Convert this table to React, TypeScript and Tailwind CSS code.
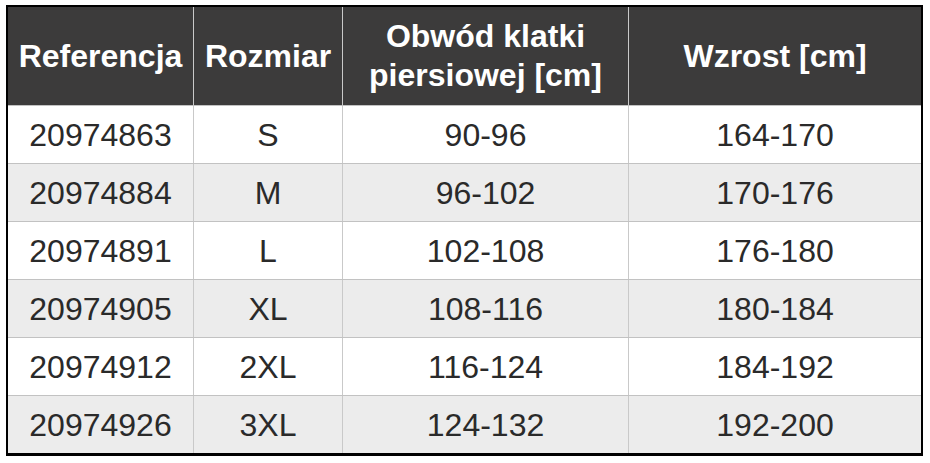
import React from 'react';

const headers = ['Referencja', 'Rozmiar', 'Obwód klatki piersiowej [cm]', 'Wzrost [cm]'];

const rows = [
  ['20974863', 'S', '90-96', '164-170'],
  ['20974884', 'M', '96-102', '170-176'],
  ['20974891', 'L', '102-108', '176-180'],
  ['20974905', 'XL', '108-116', '180-184'],
  ['20974912', '2XL', '116-124', '184-192'],
  ['20974926', '3XL', '124-132', '192-200'],
];

export default function App() {
  return (
    <div className="w-[930px] h-[463px] bg-white pt-[5px] pl-[6px] font-['Liberation_Sans',Arial,sans-serif]">
      <div className="w-[917px] border-2 border-b-[3px] border-black">
        {/* Header */}
        <div className="grid grid-cols-[186px_149px_286px_292px] h-[98px] bg-[#3c3b3b] text-white font-bold text-[32px] leading-[39px]">
          {headers.map((h, i) => (
            <div
              key={h}
              className={`flex items-center justify-center text-center px-3 ${i < 3 ? 'border-r border-[#c9c9c9]' : ''}`}
            >
              {i === 2 ? (
                <span>
                  Obwód klatki
                  <br />
                  piersiowej [cm]
                </span>
              ) : (
                h
              )}
            </div>
          ))}
        </div>

        {/* Rows */}
        {rows.map((row, r) => (
          <div
            key={row[0]}
            className={`grid grid-cols-[186px_149px_286px_292px] h-[58px] border-t border-[#c2c2c2] text-[32px] text-[#2a2a2a] ${r % 2 === 1 ? 'bg-[#ececec]' : 'bg-white'}`}
          >
            {row.map((cell, i) => (
              <div
                key={i}
                className={`flex items-center justify-center ${i < 3 ? 'border-r border-[#c9c9c9]' : ''}`}
              >
                {cell}
              </div>
            ))}
          </div>
        ))}
      </div>
    </div>
  );
}
